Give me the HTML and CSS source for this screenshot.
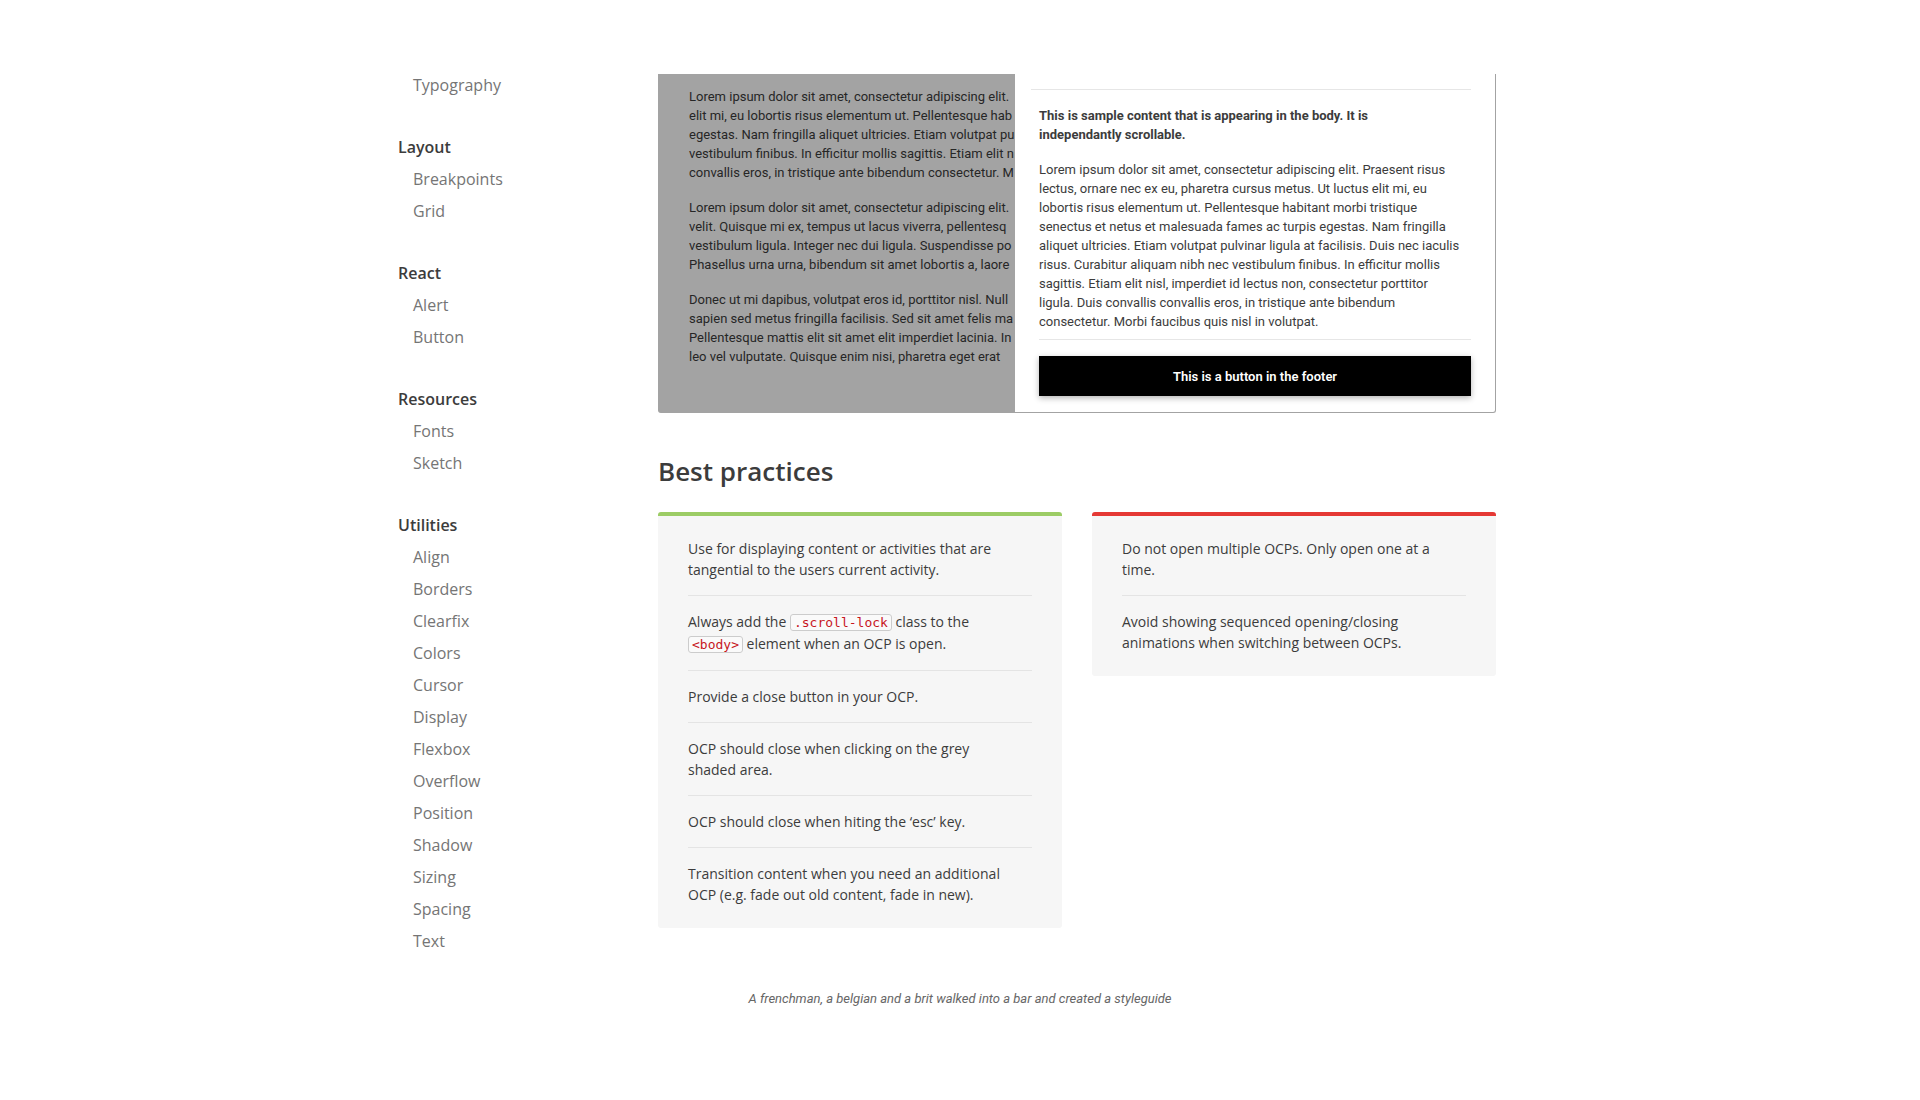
FILE: index.html
```html
<!DOCTYPE html>
<html lang="en">
<head>
<meta charset="utf-8">
<title>Off canvas panel – Styleguide</title>
<link rel="stylesheet" href="styles.css">
</head>
<body>
<div class="page">
  <nav class="sidebar" aria-label="Sections">
    <ul class="nav-list">
      <li><a href="#">Typography</a></li>
    </ul>
    <h2 class="nav-title">Layout</h2>
    <ul class="nav-list">
      <li><a href="#">Breakpoints</a></li>
      <li><a href="#">Grid</a></li>
    </ul>
    <h2 class="nav-title">React</h2>
    <ul class="nav-list">
      <li><a href="#">Alert</a></li>
      <li><a href="#">Button</a></li>
    </ul>
    <h2 class="nav-title">Resources</h2>
    <ul class="nav-list">
      <li><a href="#">Fonts</a></li>
      <li><a href="#">Sketch</a></li>
    </ul>
    <h2 class="nav-title">Utilities</h2>
    <ul class="nav-list">
      <li><a href="#">Align</a></li>
      <li><a href="#">Borders</a></li>
      <li><a href="#">Clearfix</a></li>
      <li><a href="#">Colors</a></li>
      <li><a href="#">Cursor</a></li>
      <li><a href="#">Display</a></li>
      <li><a href="#">Flexbox</a></li>
      <li><a href="#">Overflow</a></li>
      <li><a href="#">Position</a></li>
      <li><a href="#">Shadow</a></li>
      <li><a href="#">Sizing</a></li>
      <li><a href="#">Spacing</a></li>
      <li><a href="#">Text</a></li>
    </ul>
  </nav>
  <main class="main">
    <section class="demo">
      <div class="demo-page">
        <p>Lorem ipsum dolor sit amet, consectetur adipiscing elit.<br>elit mi, eu lobortis risus elementum ut. Pellentesque hab<br>egestas. Nam fringilla aliquet ultricies. Etiam volutpat pu<br>vestibulum finibus. In efficitur mollis sagittis. Etiam elit n<br>convallis eros, in tristique ante bibendum consectetur. M</p>
        <p>Lorem ipsum dolor sit amet, consectetur adipiscing elit.<br>velit. Quisque mi ex, tempus ut lacus viverra, pellentesq<br>vestibulum ligula. Integer nec dui ligula. Suspendisse po<br>Phasellus urna urna, bibendum sit amet lobortis a, laore</p>
        <p>Donec ut mi dapibus, volutpat eros id, porttitor nisl. Null<br>sapien sed metus fringilla facilisis. Sed sit amet felis ma<br>Pellentesque mattis elit sit amet elit imperdiet lacinia. In<br>leo vel vulputate. Quisque enim nisi, pharetra eget erat</p>
      </div>
      <aside class="panel">
        <div class="panel-body">
          <p><strong>This is sample content that is appearing in the body. It is<br>independantly scrollable.</strong></p>
          <p>Lorem ipsum dolor sit amet, consectetur adipiscing elit. Praesent risus<br>lectus, ornare nec ex eu, pharetra cursus metus. Ut luctus elit mi, eu<br>lobortis risus elementum ut. Pellentesque habitant morbi tristique<br>senectus et netus et malesuada fames ac turpis egestas. Nam fringilla<br>aliquet ultricies. Etiam volutpat pulvinar ligula at facilisis. Duis nec iaculis<br>risus. Curabitur aliquam nibh nec vestibulum finibus. In efficitur mollis<br>sagittis. Etiam elit nisl, imperdiet id lectus non, consectetur porttitor<br>ligula. Duis convallis convallis eros, in tristique ante bibendum<br>consectetur. Morbi faucibus quis nisl in volutpat.</p>
        </div>
        <div class="panel-footer">
          <button class="panel-button" type="button">This is a button in the footer</button>
        </div>
      </aside>
    </section>
    <h1 class="title">Best practices</h1>
    <div class="practices">
      <ul class="card card-do">
        <li>Use for displaying content or activities that are<br>tangential to the users current activity.</li>
        <li class="with-code">Always add the <code>.scroll-lock</code> class to the<br><code>&lt;body&gt;</code> element when an OCP is open.</li>
        <li>Provide a close button in your OCP.</li>
        <li>OCP should close when clicking on the grey<br>shaded area.</li>
        <li>OCP should close when hiting the ‘esc’ key.</li>
        <li>Transition content when you need an additional<br>OCP (e.g. fade out old content, fade in new).</li>
      </ul>
      <ul class="card card-dont">
        <li>Do not open multiple OCPs. Only open one at a<br>time.</li>
        <li>Avoid showing sequenced opening/closing<br>animations when switching between OCPs.</li>
      </ul>
    </div>
  </main>
</div>
<footer class="footer">A frenchman, a belgian and a brit walked into a bar and created a styleguide</footer>
</body>
</html>
```
FILE: styles.css
```css
* { box-sizing: border-box; }

body {
  margin: 0;
  background: #fff;
  color: #3c3c3c;
  font-family: "Open Sans", sans-serif;
  font-size: 14px;
  line-height: 21px;
}

p, ul, h1, h2 { margin: 0; padding: 0; }
ul { list-style: none; }

.page {
  display: flex;
  max-width: 1124px;
  margin: 0 auto;
}

/* Sidebar */
.sidebar {
  flex: 0 0 260px;
  padding-top: 69px;
  font-size: 16px;
  line-height: 32px;
}
.nav-title {
  margin-top: 30px;
  font-size: 16px;
  font-weight: 600;
}
.nav-list { padding-left: 15px; }
.nav-list a {
  display: block;
  color: #757575;
  text-decoration: none;
}

.main {
  flex: 1;
  min-width: 0;
  padding: 74px 26px 0 0;
}

/* Off canvas demo */
.demo {
  display: flex;
  overflow: hidden;
  border: 1px solid #a3a3a3;
  border-top: 0;
  border-radius: 0 0 3px 3px;
  background: #a3a3a3;
  color: #262626;
  font-family: Roboto, sans-serif;
  font-size: 13px;
  line-height: 19px;
  white-space: nowrap;
}
.demo-page {
  flex: 1;
  min-width: 0;
  overflow: hidden;
  padding: 13px 0 0 30px;
}
.demo p + p { margin-top: 16px; }
.panel {
  flex: 0 0 480px;
  padding: 15px 24px 16px 16px;
  background: #fff;
  color: #3c3c3c;
}
.panel-body {
  padding: 16px 0 8px 8px;
  border-top: 1px solid #e6e6e6;
}
.panel-footer {
  margin-left: 8px;
  padding-top: 16px;
  border-top: 1px solid #e6e6e6;
}
.panel-button {
  display: block;
  width: 100%;
  height: 40px;
  border: 0;
  background: #000;
  box-shadow: 0 2px 6px rgba(0, 0, 0, 0.3);
  color: #fff;
  font: 600 13px/19px Roboto, sans-serif;
}

/* Best practices */
.title {
  margin: 39px 0 22px;
  font-size: 26px;
  font-weight: 600;
  line-height: 38px;
}
.practices {
  display: grid;
  grid-template-columns: 1fr 1fr;
  gap: 30px;
  align-items: start;
}
.card {
  padding: 7px 30px 8px;
  border-top: 4px solid;
  border-radius: 3px;
  background: #f6f6f6;
}
.card-do { border-color: #9ccc65; }
.card-dont { border-color: #e53935; }
.card li { padding: 15px 0; }
.card li + li { border-top: 1px solid #e4e4e4; }
.card .with-code { line-height: 22px; }
.card code {
  padding: 0 3px;
  border: 1px solid #ccc;
  border-radius: 3px;
  background: #fafafa;
  color: #c7161d;
  font: 13px/15px "DejaVu Sans Mono", monospace;
}

.footer {
  padding: 32px 0 60px;
  color: #666;
  font-family: Roboto, sans-serif;
  font-size: 13px;
  font-style: italic;
  line-height: 20px;
  text-align: center;
}
```
